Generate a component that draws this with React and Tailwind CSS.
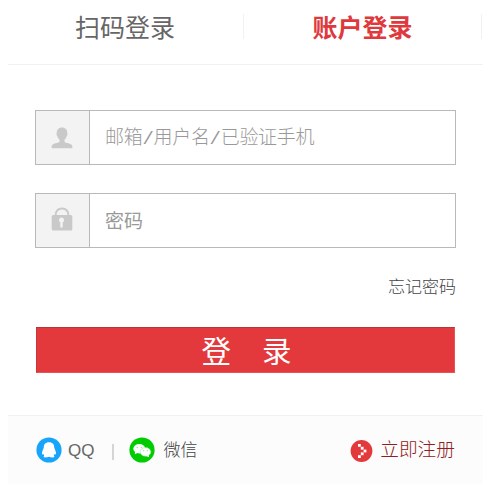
import { useState } from 'react';

const UserIcon = () => (
  <svg width="22" height="22" viewBox="0 0 22 22">
    <path fill="#c9c9c9" d="M11 0.5C7.600 0.500 5.600 2.800 5.800 6.200c-.7.4-.4 2 .4 2.500.4 1.800 1.200 3 2.300 3.900v2.400c-1.200 1-7 1.200-7.800 3.800V21.200h20.600v-2.400c-.8-2.600-6.600-2.800-7.800-3.800v-2.400c1.100-.9 1.900-2.100 2.300-3.900.8-.5 1.100-2.100.4-2.500C16.400 2.800 14.400.5 11 .5z" />
  </svg>
);

const LockIcon = () => (
  <svg width="22" height="24" viewBox="0 0 22 24">
    <path fill="none" stroke="#cbcbcb" strokeWidth="2" d="M4.500 9C4.500 4.200 7 1.500 11 1.500S17.500 4.200 17.500 9" />
    <rect x="0.700" y="8" width="20.600" height="15.500" rx="1.500" fill="#c9c9c9" />
    <circle cx="10.500" cy="13" r="2.500" fill="#f3f3f3" />
    <rect x="9.300" y="14" width="2.400" height="6.500" fill="#f3f3f3" />
  </svg>
);

const QQIcon = () => (
  <svg width="26" height="26" viewBox="0 0 26 26">
    <circle cx="13" cy="13" r="12.600" fill="#17a5fb" />
    <path fill="#fff" d="M13 5.200c-3.700 0-5.300 2.400-5.200 5.400-.3 1.600-1.900 3.600-1.800 6 .1 1.200.7 1 1.400.2.100.8.400 1.300.8 1.700-1.100 1-.5 1.900 1 1.900 1.500 0 2.900-.2 3.800-.6.900.4 2.300.6 3.800.6 1.500 0 2.100-.9 1-1.900.4-.4.700-.9.800-1.700.7.800 1.300 1 1.400-.2.100-2.400-1.500-4.400-1.800-6 .1-3-1.500-5.400-5.200-5.400z" />
  </svg>
);

const WechatIcon = () => (
  <svg width="26" height="26" viewBox="0 0 26 26">
    <circle cx="13" cy="13" r="12.600" fill="#0c0" />
    <path fill="#fff" d="M6.300 14l-.6 3.300 3.300-1.600z" />
    <ellipse cx="10.300" cy="11.700" rx="6" ry="4.700" fill="#fff" />
    <ellipse cx="16.500" cy="14.900" rx="5.300" ry="4.300" fill="#fff" stroke="#8ae88a" strokeWidth="0.500" />
    <path fill="#fff" d="M17 19l3.200 1.200-.5-2.400z" />
    <g fill="#9aea9a">
      <circle cx="8.300" cy="10.500" r="0.800" />
      <circle cx="12.400" cy="10.500" r="0.800" />
      <circle cx="14.700" cy="13.800" r="0.700" />
      <circle cx="18.300" cy="13.800" r="0.700" />
    </g>
  </svg>
);

const RegisterIcon = () => (
  <svg width="23" height="22" viewBox="0 0 23 22">
    <circle cx="11.500" cy="11" r="10.900" fill="#e4393c" />
    <g fill="#fff">
      <rect x="8" y="4" width="2.800" height="2.800" />
      <rect x="10.800" y="6.800" width="2.800" height="2.800" />
      <rect x="13.600" y="9.600" width="2.800" height="2.800" />
      <rect x="10.800" y="12.400" width="2.800" height="2.800" />
      <rect x="8" y="15.200" width="2.800" height="2.800" />
    </g>
  </svg>
);

function Field({ icon, type, label, value, onChange, className }) {
  return (
    <label className="flex h-[55px] border border-[#b9b9b9] bg-white">
      <span className="flex w-[54px] shrink-0 items-center justify-center border-r border-[#b9b9b9] bg-[#f3f3f3] pr-0.5">
        {icon}
      </span>
      <input
        type={type}
        placeholder={label}
        aria-label={label}
        value={value}
        onChange={e => onChange(e.target.value)}
        className={`min-w-0 flex-1 bg-transparent text-[19px] text-[#666] placeholder:text-[#999] focus:outline-none ${className}`}
      />
    </label>
  );
}

export default function App() {
  const [account,  setAccount]  = useState('');
  const [password, setPassword] = useState('');

  return (
    <div className="h-[491px] w-[499px] bg-white pl-2 font-['Liberation_Sans','Noto_Sans_CJK_SC',sans-serif] text-[#666]">
      <div className="w-[475px]">
        {/* Login tabs */}
        <div className="flex h-[65px] border-b border-[#f1f1f1] pt-3.5">
          <button className="-mt-3.5 h-14 w-[235px] pr-px text-[25px] leading-none">扫码登录</button>
          <span className="h-[25px] w-px bg-[#f1f1f1]" />
          <button className="-mt-3.5 h-14 w-[237px] text-[25px] leading-none font-bold text-[#de393c]">账户登录</button>
          <span className="h-[25px] w-px bg-[#f1f1f1]" />
        </div>

        {/* Form */}
        <form className="h-[350px] w-[448px] pt-[45px] pl-[27px]" onSubmit={e => e.preventDefault()}>
          <div className="flex flex-col gap-7">
            <Field icon={<UserIcon />} type="text" label="邮箱/用户名/已验证手机" value={account} onChange={setAccount}
              className="pt-1 pl-[15px] font-['Liberation_Mono','Noto_Sans_CJK_SC',monospace] font-light tracking-[-0.3px] placeholder:text-[#8c8c8c]" />
            <Field icon={<span className="-mt-1"><LockIcon /></span>} type="password" label="密码" value={password} onChange={setPassword}
              className="pt-1 pl-[15px]" />
          </div>
          <div className="mt-7 h-[51px] text-right text-[17px] leading-6 font-light text-[#444]">
            <a href="#">忘记密码</a>
          </div>
          <button className="ml-px flex h-[46px] w-[419px] items-center justify-center gap-[31px] border border-[#e85356] border-t-[#b73538] border-l-[#c4393c] bg-[#e4393c] pt-1 pl-0.5 text-[29.500px] leading-none text-white">
            <span>登</span><span>录</span>
          </button>
        </form>

        {/* Other sign-in methods */}
        <div className="flex h-[69px] items-center border-t border-[#f1f1f1] bg-[#fcfcfc] pr-7 pl-7">
          <QQIcon />
          <span className="ml-1.5 pt-0.5 text-[17px]">QQ</span>
          <span className="mt-1 ml-[18px] h-4 w-0.5 bg-[#d5d5d5]" />
          <span className="ml-[15px] flex"><WechatIcon /></span>
          <span className="ml-2 pt-0.5 text-[17px] font-light text-[#444]">微信</span>
          <a href="#" className="ml-auto flex items-center gap-[7px] text-[18.700px] font-light text-[#902020]">
            <span className="pt-0.5"><RegisterIcon /></span>
            立即注册
          </a>
        </div>
      </div>
    </div>
  );
}
